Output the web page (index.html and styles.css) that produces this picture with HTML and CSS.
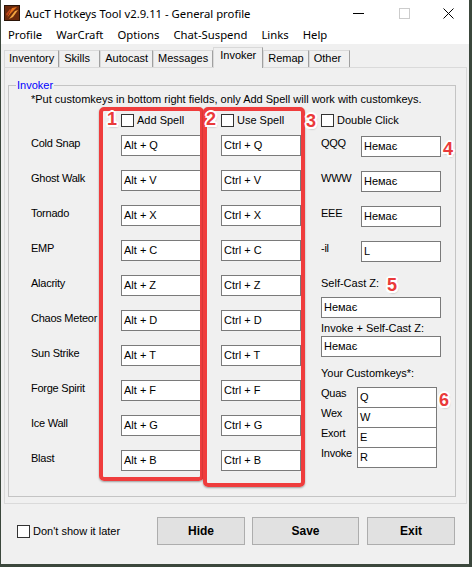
FILE: index.html
```html
<!DOCTYPE html>
<html lang="en">
<head>
  <meta charset="UTF-8" />
  <title>AucT Hotkeys Tool v2.9.11 - General profile</title>
  <link rel="stylesheet" href="styles.css">
</head>
<body>
  <div class="window">
    <div class="titlebar">
      <svg class="app-icon" width="16" height="16" viewBox="0 0 16 16">
        <rect x="0" y="0" width="16" height="16" fill="#2a1408"/>
        <rect x="1" y="1" width="14" height="14" fill="#6b2a0c"/>
        <path d="M3 13 L8 3 L13 2 L7 8 Z" fill="#e8731c"/>
        <path d="M5 14 L11 6 L14 5 L9 12 Z" fill="#f4a640"/>
        <path d="M2 9 L6 4 L7 5 L3 11 Z" fill="#c4471a"/>
      </svg>
      <span class="title">AucT Hotkeys Tool v2.9.11 - General profile</span>
      <div class="caption">
        <span class="cap-btn"><svg width="11" height="11"><line x1="0" y1="5.5" x2="11" y2="5.5" stroke="#000"/></svg></span>
        <span class="cap-btn"><svg width="11" height="11"><rect x="0.5" y="0.5" width="10" height="10" fill="none" stroke="#cccccc"/></svg></span>
        <span class="cap-btn close"><svg width="11" height="11"><path d="M0.5 0.5 L10.5 10.5 M10.5 0.5 L0.5 10.5" stroke="#000"/></svg></span>
      </div>
    </div>

    <div class="menubar">
      <span>Profile</span>
      <span>WarCraft</span>
      <span>Options</span>
      <span>Chat-Suspend</span>
      <span>Links</span>
      <span>Help</span>
    </div>

    <div class="tabs">
      <span class="tab">Inventory</span>
      <span class="tab">Skills</span>
      <span class="tab">Autocast</span>
      <span class="tab">Messages</span>
      <span class="tab active">Invoker</span>
      <span class="tab">Remap</span>
      <span class="tab">Other</span>
    </div>

    <div class="tabpage">
      <fieldset class="group">
        <legend>Invoker</legend>
        <p class="note">*Put customkeys in bottom right fields, only Add Spell will work with customkeys.</p>

        <div class="spells">
          <div></div>
          <label class="check"><span class="box"></span>Add Spell</label>
          <label class="check"><span class="box"></span>Use Spell</label>
          <label class="check wide"><span class="box"></span>Double Click</label>

          <span class="name">Cold Snap</span>
          <div class="field">Alt + Q</div>
          <div class="field">Ctrl + Q</div>
          <span class="name">QQQ</span>
          <div class="field low">Немає</div>

          <span class="name">Ghost Walk</span>
          <div class="field">Alt + V</div>
          <div class="field">Ctrl + V</div>
          <span class="name">WWW</span>
          <div class="field low">Немає</div>

          <span class="name">Tornado</span>
          <div class="field">Alt + X</div>
          <div class="field">Ctrl + X</div>
          <span class="name">EEE</span>
          <div class="field low">Немає</div>

          <span class="name">EMP</span>
          <div class="field">Alt + C</div>
          <div class="field">Ctrl + C</div>
          <span class="name">-il</span>
          <div class="field low">L</div>

          <div class="extra">
            <span class="caption-label first">Self-Cast Z:</span>
            <div class="field long">Немає</div>
            <span class="caption-label">Invoke + Self-Cast Z:</span>
            <div class="field long tight">Немає</div>
            <span class="caption-label keys-title">Your Customkeys*:</span>
            <div class="keys">
              <span>Quas</span><div class="field">Q</div>
              <span>Wex</span><div class="field">W</div>
              <span>Exort</span><div class="field">E</div>
              <span>Invoke</span><div class="field">R</div>
            </div>
          </div>

          <span class="name">Alacrity</span>
          <div class="field">Alt + Z</div>
          <div class="field">Ctrl + Z</div>

          <span class="name">Chaos Meteor</span>
          <div class="field">Alt + D</div>
          <div class="field">Ctrl + D</div>

          <span class="name">Sun Strike</span>
          <div class="field">Alt + T</div>
          <div class="field">Ctrl + T</div>

          <span class="name">Forge Spirit</span>
          <div class="field">Alt + F</div>
          <div class="field">Ctrl + F</div>

          <span class="name">Ice Wall</span>
          <div class="field">Alt + G</div>
          <div class="field">Ctrl + G</div>

          <span class="name">Blast</span>
          <div class="field">Alt + B</div>
          <div class="field">Ctrl + B</div>
        </div>
      </fieldset>
    </div>

    <div class="footer">
      <label class="check"><span class="box"></span>Don't show it later</label>
      <div class="buttons">
        <button class="btn">Hide</button>
        <button class="btn save">Save</button>
        <button class="btn">Exit</button>
      </div>
    </div>

    <!-- red annotation marks drawn over the screenshot -->
    <div class="mark box-add"></div>
    <div class="mark box-use"></div>
    <span class="num n1">1</span>
    <span class="num n2">2</span>
    <span class="num n3">3</span>
    <span class="num n4">4</span>
    <span class="num n5">5</span>
    <span class="num n6">6</span>
  </div>
</body>
</html>
```

FILE: styles.css
```css
body {
  margin: 0;
  background: #3b473c;
  font-family: "Liberation Sans", Arial, sans-serif;
  font-size: 11px;
  color: #000;
}

.window {
  position: relative;
  width: 468px;
  height: 564px;
  margin-left: 1px;
  background: #f0f0f0;
  overflow: hidden;
}

/* title + menu */
.titlebar {
  display: flex;
  align-items: center;
  height: 26px;
  background: #fff;
}

.app-icon {
  margin: 0 5px 0 3px;
  flex: none;
}

.title,
.menubar {
  font-family: "Noto Sans", "Liberation Sans", sans-serif;
  font-size: 11.3px;
}

.caption {
  margin-left: auto;
  display: flex;
  height: 26px;
}

.cap-btn {
  width: 46px;
  display: flex;
  align-items: center;
  justify-content: center;
}

.cap-btn.close {
  width: 42px;
}

.menubar {
  display: flex;
  height: 18px;
  line-height: 18px;
  background: #fff;
}

.menubar span {
  padding: 0 7px;
}

/* tabs */
.tabs {
  display: flex;
  align-items: flex-end;
  height: 23px;
  padding-left: 3px;
}

.tab {
  box-sizing: border-box;
  min-width: 41px;
  height: 17px;
  padding: 0 4px;
  line-height: 15px;
  border: 1px solid #d9d9d9;
  border-right-color: #a0a0a0;
  border-bottom: none;
}

.tab.active {
  height: 21px;
  margin-bottom: -1px;
  padding: 0 6px;
  line-height: 14px;
  background: #f0f0f0;
  position: relative;
  z-index: 1;
}

.tabpage {
  box-sizing: border-box;
  height: 437px;
  margin: 0 2px 0 3px;
  border: 1px solid #dadada;
}

/* group box */
.group {
  box-sizing: border-box;
  width: 448px;
  height: 418px;
  margin: 11px 0 0 3px;
  padding: 1px 0 0 22px;
  border: 1px solid #c4c4c4;
  min-width: 0;
}

.group legend {
  padding: 0 1px;
  margin-left: -15px;
  line-height: 13px;
  color: #0000ff;
}

.note {
  margin: 0 0 8px;
  line-height: 13px;
  white-space: nowrap;
}

.spells {
  display: grid;
  grid-template-columns: 90px 100px 100px 40px 80px;
  grid-template-rows: 21px repeat(10, 35px);
}

.check {
  display: flex;
  align-items: center;
  height: 13px;
  line-height: 13px;
}

.check.wide {
  grid-column: span 2;
}

.box {
  box-sizing: border-box;
  width: 13px;
  height: 13px;
  margin-right: 3px;
  border: 1px solid #333;
  background: #fff;
}

.name {
  padding-top: 1px;
  line-height: 14px;
  letter-spacing: -0.25px;
  white-space: nowrap;
}

.field {
  box-sizing: border-box;
  width: 80px;
  height: 21px;
  padding: 0 2px;
  line-height: 19px;
  border: 1px solid #7a7a7a;
  background: #fff;
  font-size: 11px;
}

.field.low {
  margin-top: 1px;
}

.extra {
  grid-column: 4 / span 2;
  grid-row: 6 / span 6;
  display: flex;
  flex-direction: column;
}

.caption-label {
  margin-top: 3px;
  line-height: 14px;
}

.caption-label.first {
  margin-top: 1px;
}

.field.long {
  width: 120px;
  margin-top: 7px;
}

.field.long.tight {
  margin-top: 1px;
}

.caption-label.keys-title {
  margin-top: 9px;
}

.keys {
  display: grid;
  grid-template-columns: 36px 80px;
  grid-auto-rows: 20px;
  margin-top: 7px;
}

.keys span {
  line-height: 13px;
  letter-spacing: -0.25px;
}

/* footer */
.footer {
  display: flex;
  align-items: center;
  height: 28px;
  padding: 13px 14px 0 16px;
}

.buttons {
  margin-left: auto;
  display: flex;
  gap: 7px;
}

.btn {
  box-sizing: border-box;
  width: 88px;
  height: 28px;
  border: 1px solid #adadad;
  background: #e1e1e1;
  font-family: "Liberation Sans", Arial, sans-serif;
  font-size: 12px;
  font-weight: bold;
  color: #000;
  padding: 0;
}

.btn.save {
  width: 107px;
  margin-right: 1px;
}

/* annotations */
.mark {
  position: absolute;
  box-sizing: border-box;
  border: 4px solid #ef3d3d;
  border-radius: 5px;
  box-shadow: 0 1px 2px rgba(0, 0, 0, 0.35);
}

.box-add {
  left: 98px;
  top: 107px;
  width: 105px;
  height: 374px;
}

.box-use {
  left: 202px;
  top: 107px;
  width: 102px;
  height: 380px;
}

.num {
  position: absolute;
  font-family: "Liberation Sans", Arial, sans-serif;
  font-size: 18px;
  font-weight: bold;
  line-height: 18px;
  color: #ea3a3a;
  text-shadow:
    -1.5px -1.5px 0 #fff, 1.5px -1.5px 0 #fff,
    -1.5px 1.5px 0 #fff, 1.5px 1.5px 0 #fff,
    0 -2px 0 #fff, 0 2px 0 #fff, -2px 0 0 #fff, 2px 0 0 #fff,
    1px 2px 2px rgba(0, 0, 0, 0.4);
}

.n1 { left: 106px; top: 110px; }
.n2 { left: 205px; top: 110px; }
.n3 { left: 305px; top: 112px; }
.n4 { left: 442px; top: 140px; }
.n5 { left: 386px; top: 276px; }
.n6 { left: 438px; top: 391px; }
```
